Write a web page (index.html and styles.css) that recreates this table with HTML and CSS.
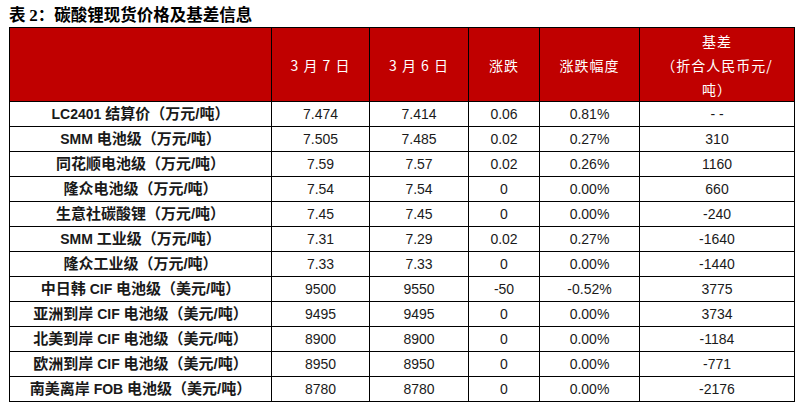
FILE: index.html
```html
<!DOCTYPE html>
<html lang="zh">
<head>
<meta charset="utf-8">
<link rel="stylesheet" href="styles.css">
</head>
<body>
<div class="title">表 <span class="num">2</span>：碳酸锂现货价格及基差信息</div>
<table class="grid">
  <colgroup>
    <col class="c1"><col class="c2"><col class="c3"><col class="c4"><col class="c5"><col class="c6">
  </colgroup>
  <thead>
    <tr>
      <th></th>
      <th>3 月 7 日</th>
      <th>3 月 6 日</th>
      <th>涨跌</th>
      <th>涨跌幅度</th>
      <th>基差<br>（折合人民币元/<br>吨）</th>
    </tr>
  </thead>
  <tbody>
    <tr><td class="name"><span class="en">LC2401 </span>结算价（万元/吨）</td><td>7.474</td><td>7.414</td><td>0.06</td><td>0.81%</td><td>- -</td></tr>
    <tr><td class="name"><span class="en">SMM </span>电池级（万元/吨）</td><td>7.505</td><td>7.485</td><td>0.02</td><td>0.27%</td><td>310</td></tr>
    <tr><td class="name">同花顺电池级（万元/吨）</td><td>7.59</td><td>7.57</td><td>0.02</td><td>0.26%</td><td>1160</td></tr>
    <tr><td class="name">隆众电池级（万元/吨）</td><td>7.54</td><td>7.54</td><td>0</td><td>0.00%</td><td>660</td></tr>
    <tr><td class="name">生意社碳酸锂（万元/吨）</td><td>7.45</td><td>7.45</td><td>0</td><td>0.00%</td><td>-240</td></tr>
    <tr><td class="name"><span class="en">SMM </span>工业级（万元/吨）</td><td>7.31</td><td>7.29</td><td>0.02</td><td>0.27%</td><td>-1640</td></tr>
    <tr><td class="name">隆众工业级（万元/吨）</td><td>7.33</td><td>7.33</td><td>0</td><td>0.00%</td><td>-1440</td></tr>
    <tr><td class="name">中日韩<span class="en"> CIF </span>电池级（美元/吨）</td><td>9500</td><td>9550</td><td>-50</td><td>-0.52%</td><td>3775</td></tr>
    <tr><td class="name">亚洲到岸<span class="en"> CIF </span>电池级（美元/吨）</td><td>9495</td><td>9495</td><td>0</td><td>0.00%</td><td>3734</td></tr>
    <tr><td class="name">北美到岸<span class="en"> CIF </span>电池级（美元/吨）</td><td>8900</td><td>8900</td><td>0</td><td>0.00%</td><td>-1184</td></tr>
    <tr><td class="name">欧洲到岸<span class="en"> CIF </span>电池级（美元/吨）</td><td>8950</td><td>8950</td><td>0</td><td>0.00%</td><td>-771</td></tr>
    <tr><td class="name">南美离岸<span class="en"> FOB </span>电池级（美元/吨）</td><td>8780</td><td>8780</td><td>0</td><td>0.00%</td><td>-2176</td></tr>
  </tbody>
</table>
</body>
</html>
```
FILE: styles.css
```css
html, body {
  margin: 0;
  padding: 0;
  background: #fff;
}
body {
  padding: 4px 0 0 9px;
  font-family: "Liberation Sans", "Noto Sans CJK SC", sans-serif;
  color: #1a1a1a;
}
.title {
  font-family: "Noto Sans CJK SC", sans-serif;
  font-weight: bold;
  font-size: 16.5px;
  line-height: 20px;
  height: 23px;
  color: #000;
}
.title .num {
  font-family: "Liberation Serif", serif;
  font-weight: bold;
  font-size: 17px;
}
.grid {
  border-collapse: collapse;
  table-layout: fixed;
  width: 785px;
  border: 1px solid #000;
}
.c1 { width: 262px; }
.c2 { width: 98px; }
.c3 { width: 99px; }
.c4 { width: 71px; }
.c5 { width: 100px; }
.c6 { width: 155px; }
.grid th {
  background: #c00000;
  color: #fff;
  font-family: "Noto Sans CJK SC", sans-serif;
  font-weight: normal;
  font-size: 14px;
  letter-spacing: 1px;
  line-height: 24px;
  height: 73px;
  padding: 0;
  border: 1px solid #000;
  text-align: center;
  vertical-align: middle;
}
.grid td {
  border: 1px solid #000;
  height: 24px;
  padding: 0;
  text-align: center;
  vertical-align: middle;
  font-size: 14px;
  line-height: 16px;
}
.grid td.name {
  font-family: "Liberation Sans", "Noto Sans CJK SC", sans-serif;
  font-weight: bold;
  font-size: 15px;
}
.grid td.name .en {
  font-size: 14px;
}
```
